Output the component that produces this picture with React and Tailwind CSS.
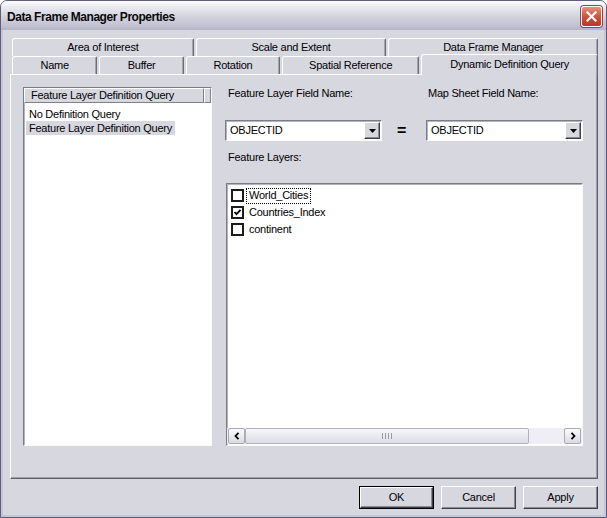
import React from "react";

const raised =
  "bg-[#d7d7e0] border border-t-white border-l-white border-r-[#404048] border-b-[#404048] shadow-[inset_-1px_-1px_0_#8a8a94]";
const tabBase =
  "h-full flex items-center justify-center bg-[#d7d7e0] border-t border-l border-r border-t-white border-l-white border-r-[#6c6c74] rounded-tl-[3px] rounded-tr-[2px] shadow-[inset_-1px_0_0_#a4a4ae]";
const sunken =
  "bg-white border border-t-[#7c7c84] border-l-[#7c7c84] border-r-[#fbfbf6] border-b-[#fbfbf6] shadow-[inset_1px_1px_0_#b4b4bc]";

function DropBtn() {
  return (
    <div className={`w-[16px] h-[17px] flex items-center justify-center ${raised}`}>
      <svg width="7" height="4" viewBox="0 0 7 4">
        <polygon points="0,0 7,0 3.5,4" fill="#000" />
      </svg>
    </div>
  );
}

function Combo() {
  return (
    <div className={`w-[157px] h-[21px] flex items-center pr-[1px] ${sunken}`}>
      <span className="flex-1 pl-[4px] leading-[13px]">OBJECTID</span>
      <DropBtn />
    </div>
  );
}

function CheckBox({ checked }) {
  return (
    <div className="w-[13px] h-[13px] shrink-0 bg-white border-2 border-[#1c1c1c] flex items-center justify-center">
      {checked && (
        <svg width="9" height="9" viewBox="0 0 9 9">
          <polyline points="1.5,4 3.5,6.2 7.5,1.8" fill="none" stroke="#000" strokeWidth="1.8" />
        </svg>
      )}
    </div>
  );
}

function ScrollBtn({ dir }) {
  return (
    <div className="w-[17px] h-[16px] shrink-0 flex items-center justify-center rounded-[2px] border border-[#a8a8b8] bg-[linear-gradient(to_bottom,#fbfbfd,#dadae4)]">
      <svg width="6" height="8" viewBox="0 0 6 8">
        {dir === "left" ? (
          <polyline points="4.5,0.8 1.5,4 4.5,7.2" fill="none" stroke="#000" strokeWidth="1.8" />
        ) : (
          <polyline points="1.5,0.8 4.5,4 1.5,7.2" fill="none" stroke="#000" strokeWidth="1.8" />
        )}
      </svg>
    </div>
  );
}

function Button({ children, def }) {
  return (
    <div className={`w-[75px] h-[23px] ${def ? "border border-black" : ""}`}>
      <div className={`w-full h-full flex items-center justify-center ${raised}`}>{children}</div>
    </div>
  );
}

export default function App() {
  return (
    <div className="w-[607px] h-[518px] overflow-hidden bg-white font-['Liberation_Sans',Arial,sans-serif] text-[11px] leading-[13px] tracking-[-0.25px] text-black">
      <div className="w-full h-full flex flex-col bg-[#d7d7e0] border border-[#5e5e7c] rounded-t-[7px] overflow-hidden">
        {/* Title bar */}
        <div className="h-[29px] shrink-0 flex items-center justify-between pl-[6px] pr-[4px] bg-[linear-gradient(to_bottom,#ffffff_0%,#ececf2_18%,#d2d2de_55%,#c2c2d2_85%,#b4b4c6_100%)]">
          <span className="font-bold text-[12px] leading-[16px] tracking-[-0.45px] text-[#0a0a0a] mt-[2px]">
            Data Frame Manager Properties
          </span>
          <div className="w-[21px] h-[21px] mt-[2px] rounded-[3px] border border-white bg-[linear-gradient(to_bottom,#e8907c,#cc4a36_60%,#b8382a)] flex items-center justify-center shadow-[0_0_0_1px_#a04038]">
            <svg width="11" height="11" viewBox="0 0 11 11">
              <path d="M1.5 1.5 L9.5 9.5 M9.5 1.5 L1.5 9.5" stroke="#fff" strokeWidth="2.2" strokeLinecap="square" />
            </svg>
          </div>
        </div>

        {/* Body */}
        <div className="flex-1 flex flex-col border-x-2 border-b-2 border-[#c6c6d4] pl-[7px] pr-[6px] pt-[8px]">
          {/* Tabs */}
          <div className="flex flex-col">
            <div className="h-[18px] flex gap-[2px] pl-[2px]">
              <div className={`${tabBase} w-[182px]`}>Area of Interest</div>
              <div className={`${tabBase} w-[191px]`}>Scale and Extent</div>
              <div className={`${tabBase} w-[210px]`}>Data Frame Manager</div>
            </div>
            <div className="h-[18px] flex items-start gap-[2px] pl-[2px]">
              <div className={`${tabBase} w-[86px]`}>Name</div>
              <div className={`${tabBase} w-[85px]`}>Buffer</div>
              <div className={`${tabBase} w-[95px]`}>Rotation</div>
              <div className={`${tabBase} w-[138px]`}>Spatial Reference</div>
              <div className="relative z-10 w-[178px] h-[21px] -mt-[2px] -mb-[1px] flex items-center justify-center bg-[#d7d7e0] border-t border-l border-r border-t-white border-l-white border-r-[#6c6c74] rounded-tl-[3px] rounded-tr-[2px] shadow-[inset_-1px_0_0_#a4a4ae] pb-[2px]">
                Dynamic Definition Query
              </div>
            </div>
          </div>

          {/* Panel */}
          <div className="h-[405px] flex pt-[12px] pl-[12px] border border-t-white border-l-white border-r-[#606068] border-b-[#606068] shadow-[inset_-1px_-1px_0_#a0a0aa]">
            {/* Left list */}
            <div className={`w-[189px] h-[359px] flex flex-col ${sunken}`}>
              <div className="h-[15px] flex shrink-0">
                <div className="w-[180px] h-full flex items-center pl-[6px] bg-[#d7d7e0] border border-t-white border-l-white border-r-[#808088] border-b-[#808088]">
                  Feature Layer Definition Query
                </div>
                <div className="flex-1 h-full bg-[#d7d7e0] border border-t-white border-l-white border-r-[#808088] border-b-[#808088]"></div>
              </div>
              <div className="flex flex-col pt-[4px] pl-[2px]">
                <div className="h-[14px] flex items-center">
                  <span className="px-[3px]">No Definition Query</span>
                </div>
                <div className="h-[14px] flex items-center">
                  <span className="px-[3px] h-[14px] flex items-center bg-[#d7d7e0]">Feature Layer Definition Query</span>
                </div>
              </div>
            </div>

            {/* Right column */}
            <div className="ml-[14px] w-[357px] flex flex-col">
              <div className="h-[13px] flex">
                <span className="w-[200px] pl-[2px]">Feature Layer Field Name:</span>
                <span className="pl-[2px]">Map Sheet Field Name:</span>
              </div>
              <div className="mt-[20px] h-[21px] flex items-center -ml-[1px]">
                <Combo />
                <div className="w-[44px] flex justify-center pr-[5px]">
                  <span className="text-[16px] font-bold leading-[16px]">=</span>
                </div>
                <Combo />
              </div>
              <div className="mt-[10px] h-[13px] pl-[2px]">Feature Layers:</div>

              <div className={`mt-[19px] h-[263px] w-[357px] flex flex-col ${sunken}`}>
                <div className="flex-1 flex flex-col pt-[3px] pl-[4px]">
                  <div className="h-[17px] flex items-center">
                    <CheckBox />
                    <span className="ml-[2px] px-[2px] h-[16px] flex items-center border border-dotted border-black">
                      World_Cities
                    </span>
                  </div>
                  <div className="h-[17px] flex items-center">
                    <CheckBox checked />
                    <span className="ml-[3px] px-[2px]">Countries_Index</span>
                  </div>
                  <div className="h-[17px] flex items-center">
                    <CheckBox />
                    <span className="ml-[3px] px-[2px]">continent</span>
                  </div>
                </div>
                <div className="h-[16px] mb-[1px] flex pl-[1px] pr-[1px] bg-[#eeeef4]">
                  <ScrollBtn dir="left" />
                  <div className="w-[284px] h-full flex items-center justify-center gap-[2px] rounded-[2px] border border-[#b0b0c0] bg-[linear-gradient(to_bottom,#f6f6fa,#dcdce6)]">
                    <span className="w-[1px] h-[6px] bg-[#9a9aa8]"></span>
                    <span className="w-[1px] h-[6px] bg-[#9a9aa8]"></span>
                    <span className="w-[1px] h-[6px] bg-[#9a9aa8]"></span>
                    <span className="w-[1px] h-[6px] bg-[#9a9aa8]"></span>
                  </div>
                  <div className="flex-1"></div>
                  <ScrollBtn dir="right" />
                </div>
              </div>
            </div>
          </div>

          {/* Buttons */}
          <div className="mt-[7px] flex justify-end gap-[7px]">
            <Button def>OK</Button>
            <Button>Cancel</Button>
            <Button>Apply</Button>
          </div>
        </div>
      </div>
    </div>
  );
}
